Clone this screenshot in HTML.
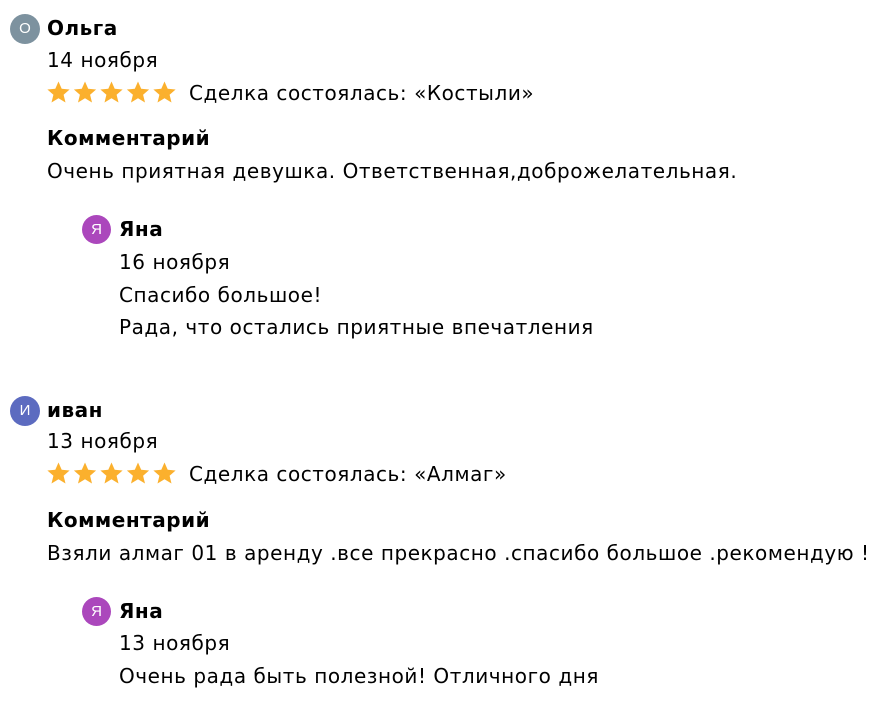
<!DOCTYPE html>
<html><head><meta charset="utf-8"><style>
body{margin:0;background:#fff;width:895px;height:709px;position:relative;overflow:hidden;font-family:"DejaVu Sans",sans-serif;color:#000}
.t{position:absolute;font-size:20px;line-height:24px;white-space:nowrap;letter-spacing:0.55px}
.b{font-weight:bold;letter-spacing:0.5px}
.av{position:absolute;width:30px;height:30px;border-radius:50%;color:#fff;font-size:15px;line-height:30px;text-align:center;font-family:"Liberation Sans",sans-serif}
.stars{position:absolute;left:46px;height:25px}
</style></head><body>
<div class="av" style="left:10px;top:14px;background:#7d929f">О</div>
<div class="t b" style="left:47px;top:16px">Ольга</div>
<div class="t" style="left:47px;top:48px">14 ноября</div>
<svg class="stars" style="top:80px" width="135" height="25" viewBox="0 0 135 25"><g fill="#fbb02d">
<path id="s" d="M12.5 1.5l3.2 7.3 7.9.7-6 5.2 1.9 7.8-7-4.2-7 4.2 1.9-7.8-6-5.2 7.9-.7z"/>
<use href="#s" x="26.5"/><use href="#s" x="53"/><use href="#s" x="79.5"/><use href="#s" x="106"/></g></svg>
<div class="t" style="left:189px;top:81px">Сделка состоялась: «Костыли»</div>
<div class="t b" style="left:47px;top:126px">Комментарий</div>
<div class="t" style="left:47px;top:159px">Очень приятная девушка. Ответственная,доброжелательная.</div>
<div class="av" style="left:82px;top:215px;width:29px;height:29px;line-height:29px;background:#ab47bc">Я</div>
<div class="t b" style="left:119px;top:217px">Яна</div>
<div class="t" style="left:119px;top:250px">16 ноября</div>
<div class="t" style="left:119px;top:283px">Спасибо большое!</div>
<div class="t" style="left:119px;top:315px">Рада, что остались приятные впечатления</div>

<div class="av" style="left:10px;top:396px;background:#5c6bc0">И</div>
<div class="t b" style="left:47px;top:398px">иван</div>
<div class="t" style="left:47px;top:429px">13 ноября</div>
<svg class="stars" style="top:461px" width="135" height="25" viewBox="0 0 135 25"><g fill="#fbb02d">
<use href="#s"/><use href="#s" x="26.5"/><use href="#s" x="53"/><use href="#s" x="79.5"/><use href="#s" x="106"/></g></svg>
<div class="t" style="left:189px;top:462px">Сделка состоялась: «Алмаг»</div>
<div class="t b" style="left:47px;top:508px">Комментарий</div>
<div class="t" style="left:47px;top:541px">Взяли алмаг 01 в аренду .все прекрасно .спасибо большое .рекомендую !</div>
<div class="av" style="left:82px;top:597px;width:29px;height:29px;line-height:29px;background:#ab47bc">Я</div>
<div class="t b" style="left:119px;top:599px">Яна</div>
<div class="t" style="left:119px;top:631px">13 ноября</div>
<div class="t" style="left:119px;top:664px">Очень рада быть полезной! Отличного дня</div>
</body></html>
